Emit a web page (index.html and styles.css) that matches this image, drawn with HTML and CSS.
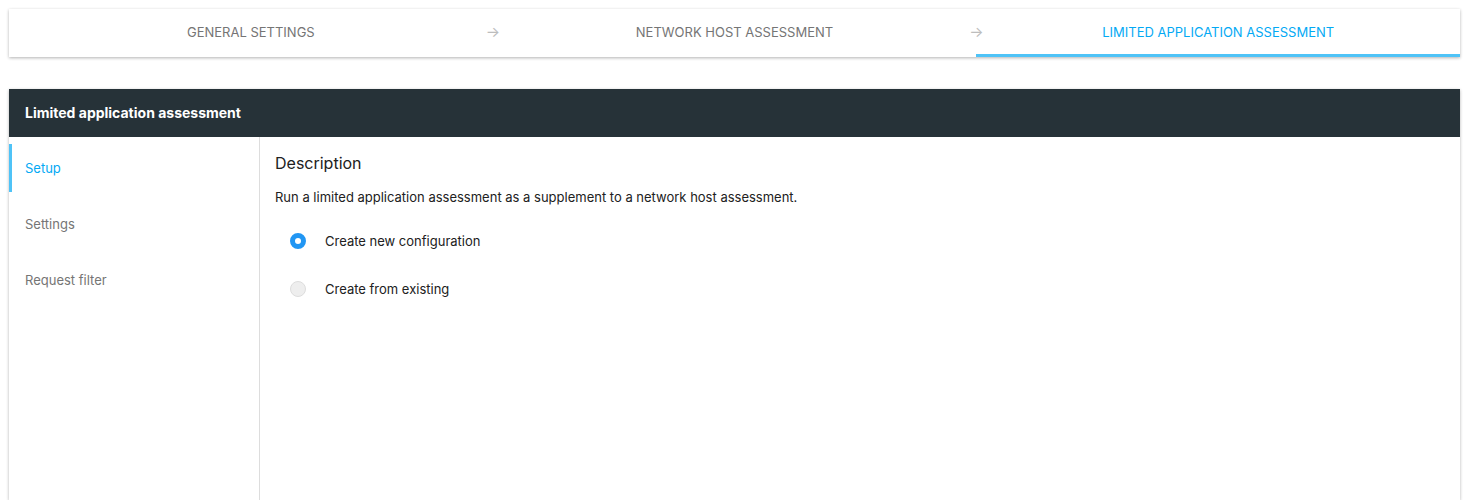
FILE: index.html
```html
<!DOCTYPE html>
<html>
<head>
	<title>Limited application assessment</title>
	<meta charset="UTF-8">
	<link rel="stylesheet" href="styles.css">
</head>
<body>
	<div class="stepper">
		<div class="step">General settings</div>
		<div class="step">Network host assessment</div>
		<div class="step active">Limited application assessment</div>
	</div>

	<div class="card">
		<div class="card-header">Limited application assessment</div>
		<div class="card-body">
			<ul class="side-nav">
				<li class="active">Setup</li>
				<li>Settings</li>
				<li>Request filter</li>
			</ul>
			<div class="content">
				<h2>Description</h2>
				<p>Run a limited application assessment as a supplement to a network host assessment.</p>
				<label class="radio checked"><span class="dot"></span>Create new configuration</label>
				<label class="radio"><span class="dot"></span>Create from existing</label>
			</div>
		</div>
	</div>
</body>
</html>
```

FILE: styles.css
```css
body {
	margin: 0;
	padding: 9px 11px 0 9px;
	font-family: Inter, "Noto Sans", sans-serif;
	font-size: 13px;
	color: #212121;
	background-color: #ffffff;
}

.stepper {
	display: flex;
	height: 48px;
	background-color: #ffffff;
	box-shadow: 0 1px 3px rgba(0,0,0,0.3);
}

.step {
	flex: 1;
	position: relative;
	display: flex;
	align-items: center;
	justify-content: center;
	text-transform: uppercase;
	color: #757575;
	box-sizing: border-box;
	border-bottom: 3px solid transparent;
	padding-top: 1px;
}

.step + .step::before {
	content: "\2192";
	position: absolute;
	left: -7px;
	top: 13px;
	font-size: 15px;
	color: #bdbdbd;
}

.step.active {
	color: #03a9f4;
	border-bottom-color: #4fc3f7;
}

.card {
	margin-top: 32px;
	box-shadow: 0 1px 3px rgba(0,0,0,0.3);
	background-color: #ffffff;
}

.card-header {
	height: 48px;
	line-height: 48px;
	padding-left: 16px;
	background-color: #263238;
	color: #ffffff;
	font-weight: 700;
	font-size: 14px;
}

.card-body {
	display: flex;
	height: 363px;
}

.side-nav {
	list-style: none;
	margin: 0;
	padding: 7px 0 0 0;
	width: 250px;
	border-right: 1px solid #dddddd;
}

.side-nav li {
	height: 48px;
	line-height: 48px;
	margin-bottom: 8px;
	color: #757575;
	border-left: 3px solid transparent;
	padding-left: 13px;
}

.side-nav li.active {
	color: #03a9f4;
	border-left-color: #4fc3f7;
}

.content {
	flex: 1;
	padding: 16px 15px;
}

.content h2 {
	margin: 0;
	font-size: 16px;
	font-weight: 400;
	line-height: 20px;
}

.content p {
	margin: 16px 0 12px 0;
	line-height: 16px;
}

.radio {
	display: flex;
	align-items: center;
	height: 48px;
	padding-left: 15px;
}

.radio .dot {
	box-sizing: border-box;
	width: 16px;
	height: 16px;
	border-radius: 50%;
	border: 1px solid #dddddd;
	background-color: #eeeeee;
	margin-right: 19px;
}

.radio.checked .dot {
	border: 5px solid #2196f3;
	background-color: #ffffff;
}
```
